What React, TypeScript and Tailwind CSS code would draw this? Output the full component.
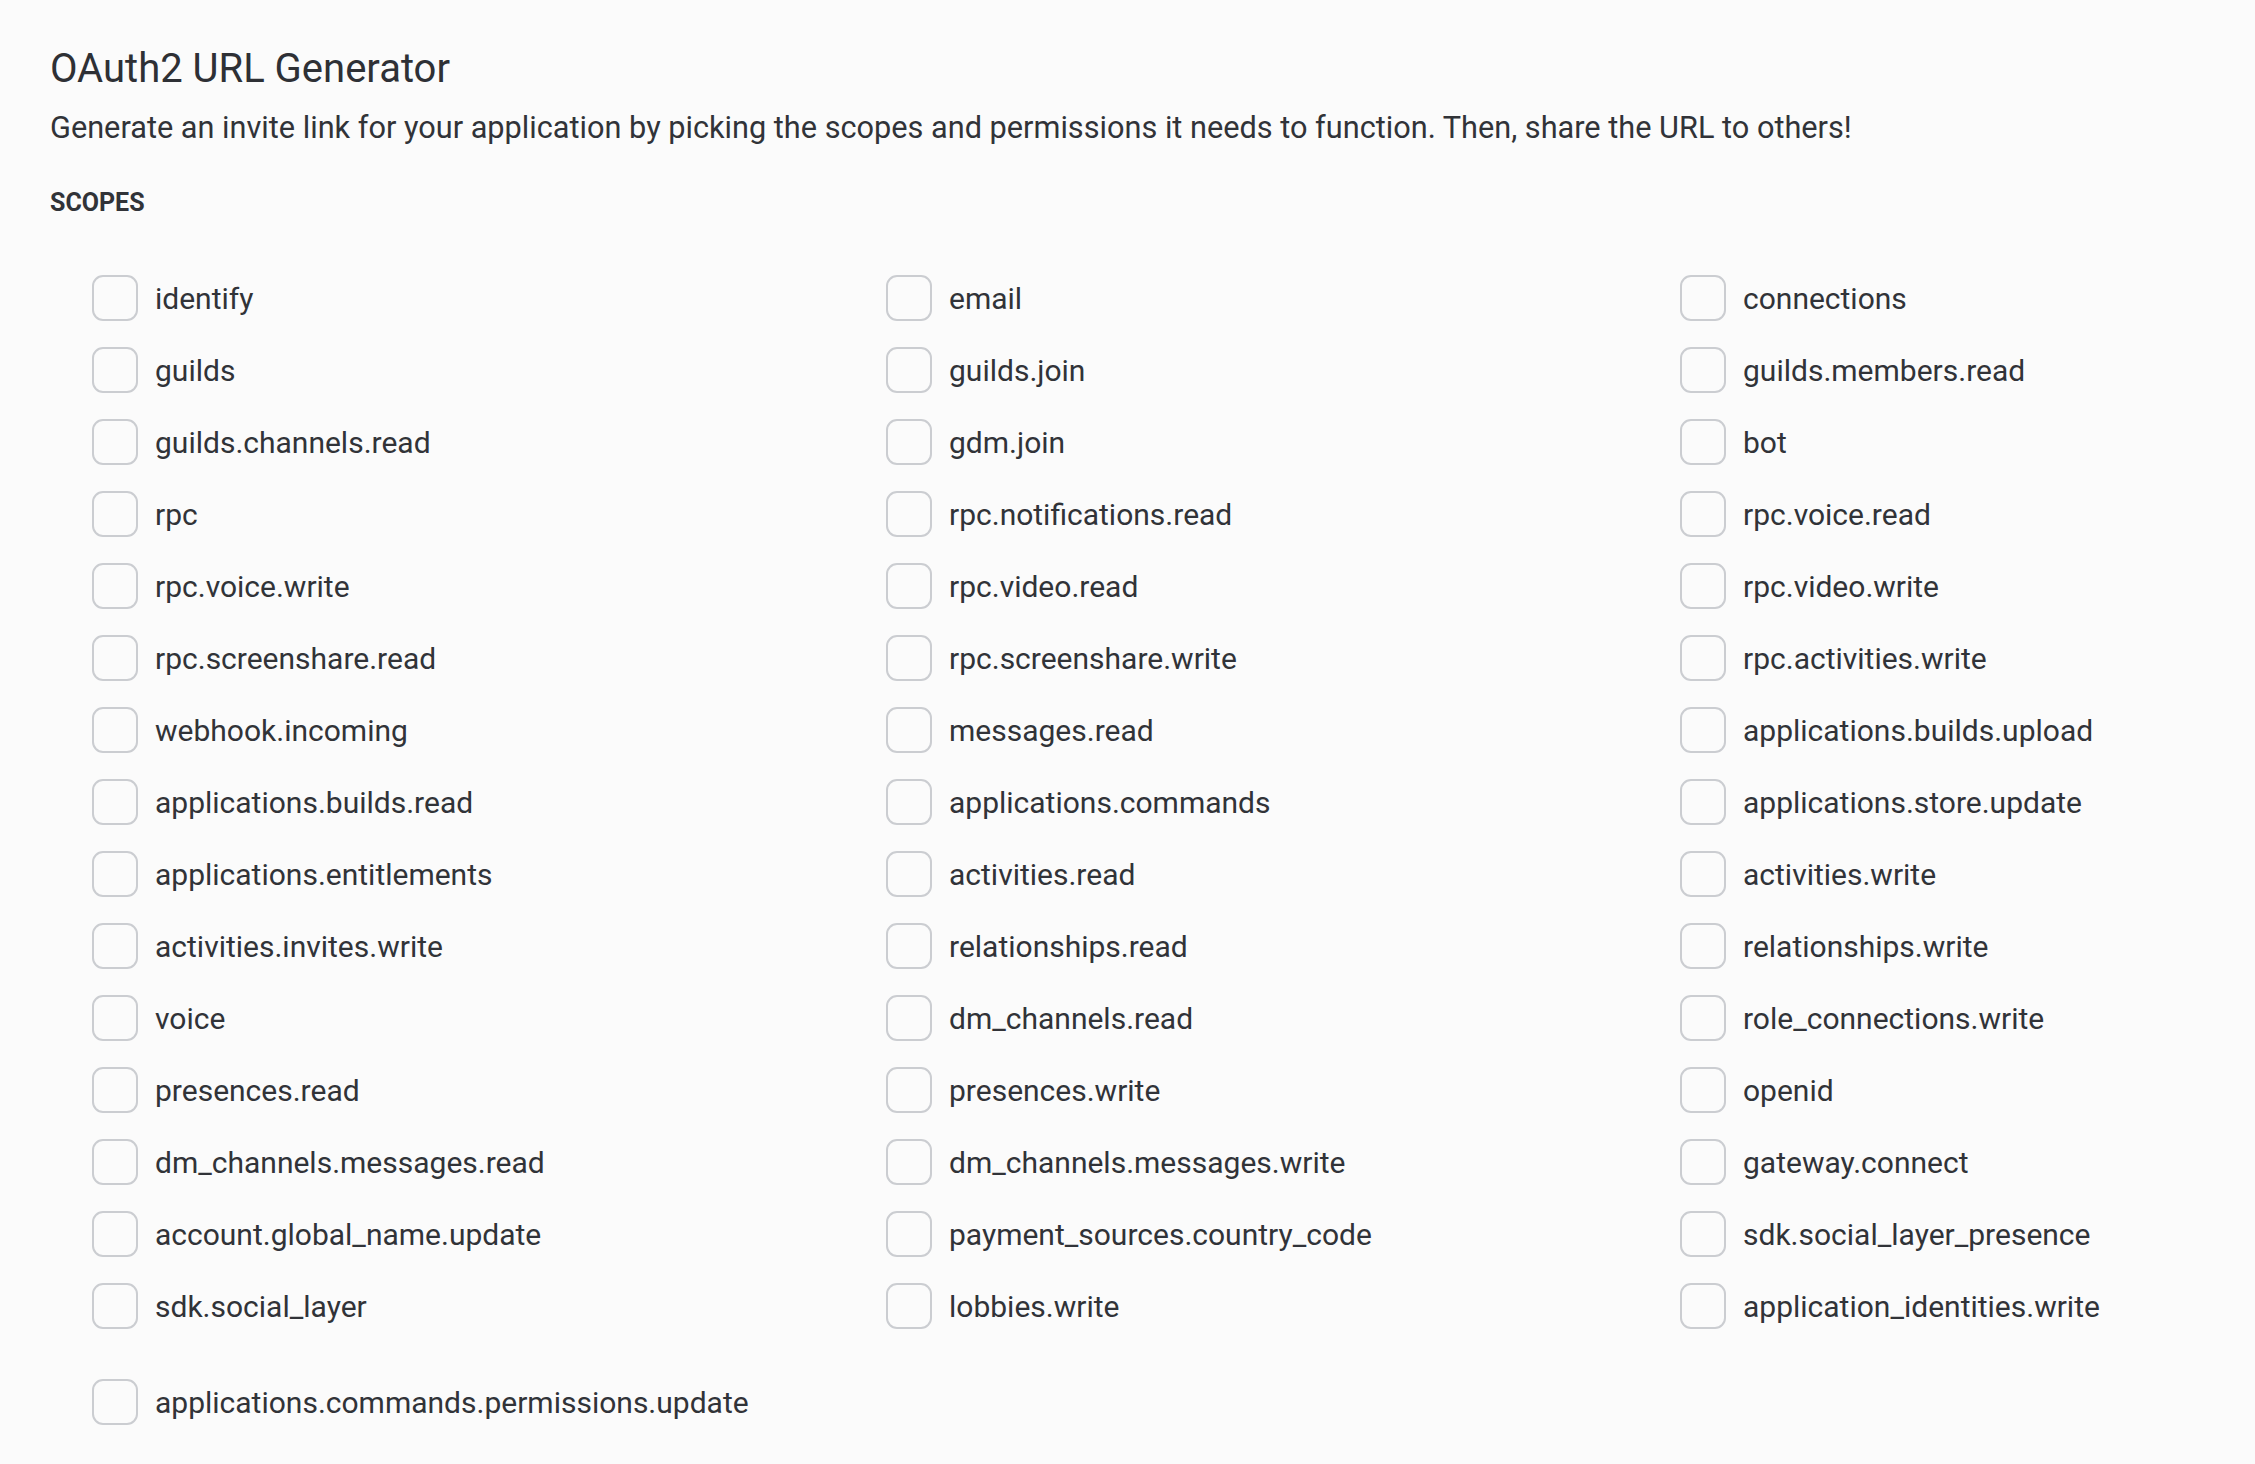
const SCOPES: string[] = [
  "identify",
  "email",
  "connections",
  "guilds",
  "guilds.join",
  "guilds.members.read",
  "guilds.channels.read",
  "gdm.join",
  "bot",
  "rpc",
  "rpc.notifications.read",
  "rpc.voice.read",
  "rpc.voice.write",
  "rpc.video.read",
  "rpc.video.write",
  "rpc.screenshare.read",
  "rpc.screenshare.write",
  "rpc.activities.write",
  "webhook.incoming",
  "messages.read",
  "applications.builds.upload",
  "applications.builds.read",
  "applications.commands",
  "applications.store.update",
  "applications.entitlements",
  "activities.read",
  "activities.write",
  "activities.invites.write",
  "relationships.read",
  "relationships.write",
  "voice",
  "dm_channels.read",
  "role_connections.write",
  "presences.read",
  "presences.write",
  "openid",
  "dm_channels.messages.read",
  "dm_channels.messages.write",
  "gateway.connect",
  "account.global_name.update",
  "payment_sources.country_code",
  "sdk.social_layer_presence",
  "sdk.social_layer",
  "lobbies.write",
  "application_identities.write",
];

function ScopeCheckbox({ label }: { label: string }) {
  return (
    <label className="flex h-[46px] items-center gap-[17px] cursor-pointer">
      <span className="h-[46px] w-[46px] shrink-0 rounded-[11px] border-2 border-[#cbcdd1] bg-transparent" />
      <span className="pt-[2px] text-[30px] leading-none text-[#313338] whitespace-nowrap">{label}</span>
    </label>
  );
}

export default function App() {
  return (
    <div
      className="min-h-screen w-full overflow-hidden bg-[#fbfbfb] pl-[50px] pt-[46px] pb-[39px]"
      style={{ fontFamily: "Roboto, 'Noto Sans', sans-serif" }}
    >
      <h1 className="text-[40px] leading-[46px] font-normal text-[#2e3035]">OAuth2 URL Generator</h1>
      <p className="mt-[18px] text-[30.7px] leading-[36px] text-[#313338]">
        Generate an invite link for your application by picking the scopes and permissions it needs to function.
        Then, share the URL to others!
      </p>
      <h2 className="mt-[42px] text-[25px] leading-[30px] font-bold text-[#313338]">SCOPES</h2>

      <div className="mt-[57px] pl-[42px]">
        <div className="grid grid-cols-[repeat(3,794px)] gap-y-[26px]">
          {SCOPES.map((s) => (
            <ScopeCheckbox key={s} label={s} />
          ))}
        </div>
        <div className="mt-[50px]">
          <ScopeCheckbox label="applications.commands.permissions.update" />
        </div>
      </div>
    </div>
  );
}
